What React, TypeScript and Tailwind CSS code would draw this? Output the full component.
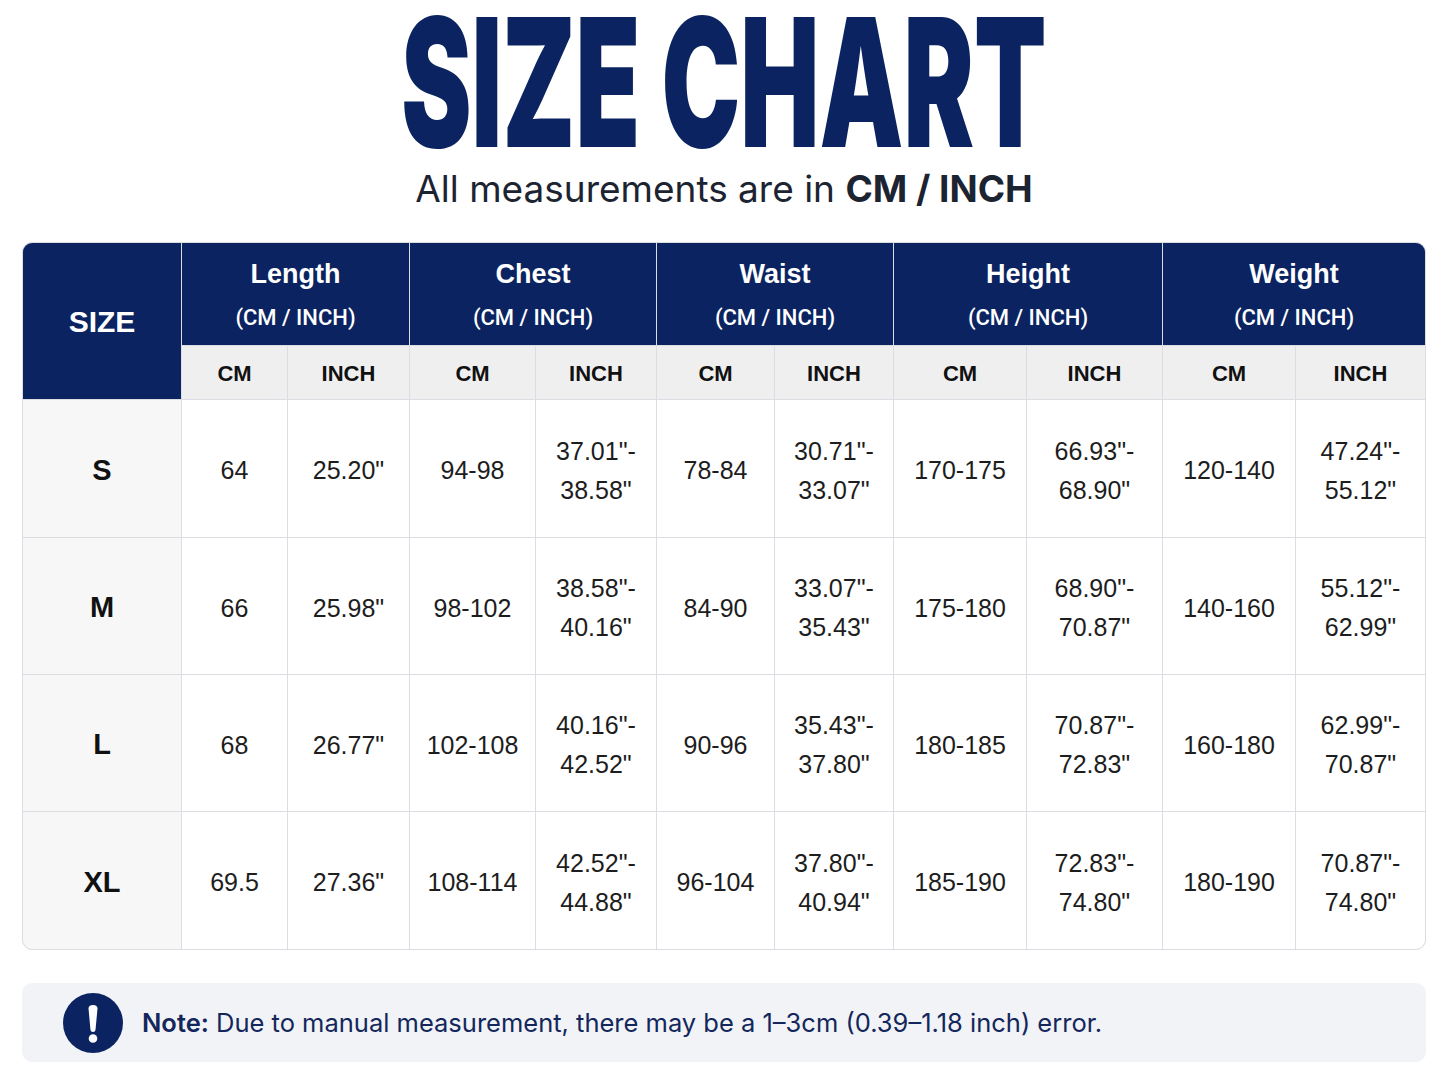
import React from "react";

const groups = ["Length", "Chest", "Waist", "Height", "Weight"];

const rows: { size: string; vals: (string | [string, string])[] }[] = [
  {
    size: "S",
    vals: ["64", '25.20"', "94-98", ['37.01"-', '38.58"'], "78-84", ['30.71"-', '33.07"'], "170-175", ['66.93"-', '68.90"'], "120-140", ['47.24"-', '55.12"']],
  },
  {
    size: "M",
    vals: ["66", '25.98"', "98-102", ['38.58"-', '40.16"'], "84-90", ['33.07"-', '35.43"'], "175-180", ['68.90"-', '70.87"'], "140-160", ['55.12"-', '62.99"']],
  },
  {
    size: "L",
    vals: ["68", '26.77"', "102-108", ['40.16"-', '42.52"'], "90-96", ['35.43"-', '37.80"'], "180-185", ['70.87"-', '72.83"'], "160-180", ['62.99"-', '70.87"']],
  },
  {
    size: "XL",
    vals: ["69.5", '27.36"', "108-114", ['42.52"-', '44.88"'], "96-104", ['37.80"-', '40.94"'], "185-190", ['72.83"-', '74.80"'], "180-190", ['70.87"-', '74.80"']],
  },
];

export default function App() {
  return (
    <div className="min-h-[1086px] w-[1448px] bg-white">
      {/* Title */}
      <div className="flex h-[170px] justify-center">
        <div
          className="-mt-[7px] h-[177px] origin-center scale-x-[0.59] whitespace-nowrap text-[179px] font-black leading-none tracking-[0px] text-[#0b2461]"
          style={{ fontFamily: "Inter, 'Noto Sans', sans-serif" }}
        >
          SIZE CHART
        </div>
      </div>
      <div
        className="flex h-[37px] justify-center text-[37px] leading-none text-[#1c2331]"
        style={{ fontFamily: "Inter, 'Noto Sans', sans-serif" }}
      >
        <span>
          All measurements are in <span className="font-bold">CM / INCH</span>
        </span>
      </div>

      {/* Table */}
      <div className="px-[22px] pt-[35px]">
        <div
          className="grid grid-cols-[158px_105px_121px_125px_120px_117px_118px_132px_135px_132px_129px] grid-rows-[102px_53px_137px_136px_136px_137px] gap-px overflow-hidden rounded-[10px] border border-[#dcdde2] bg-[#dcdde2]"
          style={{ fontFamily: "'Liberation Sans', Arial, sans-serif" }}
        >
          <div className="row-span-2 flex items-center justify-center bg-[#0b2461] pt-[1px] text-[30px] font-bold text-white">
            SIZE
          </div>
          {groups.map((g) => (
            <div
              key={g}
              className="col-span-2 flex flex-col items-center justify-center bg-[#0b2461] pt-[2px] text-white"
            >
              <div className="text-[27px] font-bold leading-none">{g}</div>
              <div
                className="mt-[19px] text-[22px] font-medium leading-none"
                style={{ fontFamily: "Roboto, 'Liberation Sans', sans-serif" }}
              >
                (CM / INCH)
              </div>
            </div>
          ))}
          {groups.map((g) => (
            <React.Fragment key={g + "sub"}>
              <div className="flex items-center justify-center bg-[#efeff0] pt-[2px] text-[22px] font-bold text-[#111]">
                CM
              </div>
              <div className="flex items-center justify-center bg-[#efeff0] pt-[2px] text-[22px] font-bold text-[#111]">
                INCH
              </div>
            </React.Fragment>
          ))}
          {rows.map((r) => (
            <React.Fragment key={r.size}>
              <div className="flex items-center justify-center bg-[#f7f7f8] pt-[4px] text-[29px] font-bold text-[#111]">
                {r.size}
              </div>
              {r.vals.map((v, i) => (
                <div
                  key={i}
                  className="flex flex-col items-center justify-center bg-white pt-[4px] text-[25px] leading-[39px] text-[#1d1d1d]"
                >
                  {Array.isArray(v) ? (
                    <>
                      <span>{v[0]}</span>
                      <span>{v[1]}</span>
                    </>
                  ) : (
                    <span>{v}</span>
                  )}
                </div>
              ))}
            </React.Fragment>
          ))}
        </div>
      </div>

      {/* Note */}
      <div className="px-[22px] pt-[33px]">
        <div
          className="flex h-[79px] items-center rounded-[10px] bg-[#f2f3f6] pl-[41px] text-[25.5px] text-[#13275c]"
          style={{ fontFamily: "Inter, 'Noto Sans', sans-serif" }}
        >
          <svg width="60" height="60" viewBox="0 0 60 60" className="shrink-0">
            <circle cx="30" cy="30" r="30" fill="#0b2461" />
            <path d="M25.5 15.5 Q25.5 12 30 12 Q34.5 12 34.5 15.5 L32.5 37 Q32.3 39 30 39 Q27.7 39 27.5 37 Z" fill="#fff" />
            <circle cx="30" cy="45.5" r="4.3" fill="#fff" />
          </svg>
          <div className="ml-[19px] whitespace-nowrap pt-[2px]">
            <span className="font-semibold">Note:</span> Due to manual measurement, there may be a 1–3cm (0.39–1.18 inch) error.
          </div>
        </div>
      </div>
    </div>
  );
}
